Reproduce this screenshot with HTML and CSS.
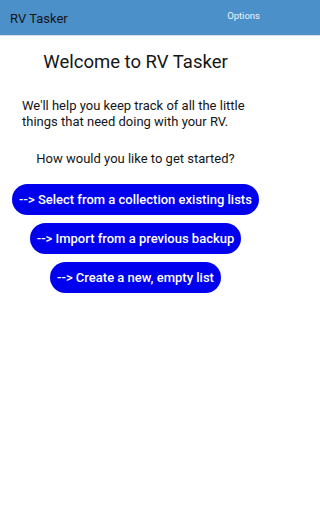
FILE: index.html
```html
<!DOCTYPE html>
<html>
<head>
<meta charset="utf-8">
<link rel="stylesheet" href="styles.css">
</head>
<body>
<div class="screen">
<header class="appbar">
  <div class="appbar-title">RV Tasker</div>
  <div class="appbar-action">Options</div>
</header>
<main class="content">
  <h1 class="welcome">Welcome to RV Tasker</h1>
  <p class="intro">We'll help you keep track of all the little things that need doing with your RV.</p>
  <p class="question">How would you like to get started?</p>
  <div class="actions">
    <button class="pill">--&gt; Select from a collection existing lists</button>
    <button class="pill">--&gt; Import from a previous backup</button>
    <button class="pill">--&gt; Create a new, empty list</button>
  </div>
</main>
</div>
</body>
</html>
```
FILE: styles.css
```css
html {
  background: linear-gradient(to bottom, #4b90c9 0, #4b90c9 35px, #d9dde2 35px, #d9dde2 36px, #ffffff 36px);
}
html, body {
  margin: 0;
  padding: 0;
  font-family: Roboto, "Liberation Sans", sans-serif;
}
.screen {
  width: 271px;
  min-height: 512px;
}
.appbar {
  height: 35px;
  box-sizing: border-box;
  background: #4b90c9;
  display: flex;
  align-items: flex-start;
  justify-content: space-between;
  padding: 0 11px 0 10px;
}
.appbar-title {
  font-size: 13px;
  color: #151515;
  margin-top: 11px;
}
.appbar-action {
  font-size: 9.5px;
  color: #eef3fa;
  margin-top: 10px;
}
.content {
  display: flex;
  flex-direction: column;
  align-items: center;
  margin-top: 1px;
}
.welcome {
  margin: 15px 0 0;
  font-size: 18.5px;
  font-weight: 400;
  color: #151515;
  line-height: 22px;
}
.intro {
  margin: 25px 0 0;
  align-self: stretch;
  padding: 0 22px;
  font-size: 13px;
  line-height: 16px;
  color: #151515;
}
.question {
  margin: 21px 0 0;
  font-size: 13px;
  line-height: 16px;
  color: #151515;
}
.actions {
  margin-top: 17px;
  display: flex;
  flex-direction: column;
  align-items: center;
  gap: 8px;
}
.pill {
  height: 31px;
  border: none;
  border-radius: 15.5px;
  background: #0000ee;
  color: #fff;
  font-family: Roboto, "Liberation Sans", sans-serif;
  font-size: 13px;
  font-weight: 500;
  padding: 0 7px;
  white-space: nowrap;
}
```
